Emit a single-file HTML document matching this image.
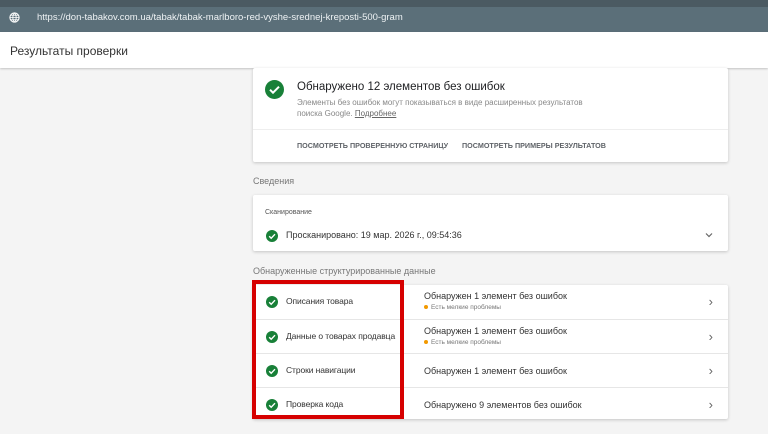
<!DOCTYPE html>
<html><head><meta charset="utf-8"><style>
*{box-sizing:border-box;margin:0;padding:0}
body{width:768px;height:434px;overflow:hidden;background:#f4f4f4;font-family:"Liberation Sans",sans-serif;position:relative;color:#202124}
.top{position:absolute;left:0;top:0;width:768px;height:7px;background:#4b5a62}
.url{position:absolute;left:0;top:7px;width:768px;height:25px;background:#5b6f79;color:#eef2f4;font-size:9.5px;line-height:22px;padding-left:37px}
.globe{position:absolute;left:9px;top:12px}
.hdr{position:absolute;left:0;top:32px;width:768px;height:36px;background:#fff;font-size:12px;line-height:38px;padding-left:10px;color:#333;box-shadow:0 1px 2px rgba(0,0,0,.2)}
.card{position:absolute;left:253px;width:475px;background:#fff;box-shadow:0 1px 3px rgba(0,0,0,.2);border-radius:2px}
.chk{position:absolute;width:12px;height:12px;border-radius:50%;background:#188038}
.chk svg{position:absolute;left:0;top:0}
.lbl{position:absolute;font-size:9px;color:#555}
.row{position:absolute;left:0;width:475px;height:34px;border-top:1px solid #e6e6e6}
.row .t{position:absolute;left:33px;top:11px;font-size:8.5px;color:#333;white-space:nowrap;letter-spacing:-.1px}
.row .r{position:absolute;left:171px;top:6px;font-size:9px;color:#333}
.row .r1{top:12px}
.row .s{position:absolute;left:171px;top:19px;font-size:6.5px;color:#777}
.row .s:before{content:"";display:inline-block;width:4px;height:4px;border-radius:50%;background:#f29900;margin-right:3px;vertical-align:middle}
.row .ar{position:absolute;right:15px;top:9px;font-size:13px;color:#666}
.red{position:absolute;left:252px;top:280px;width:152px;height:139px;border:4px solid #d60000}
.btn{position:absolute;top:73px;font-size:7.2px;font-weight:bold;color:#5f6368;white-space:nowrap}
</style></head><body>
<div class="top"></div>
<div class="url">https://don-tabakov.com.ua/tabak/tabak-marlboro-red-vyshe-srednej-kreposti-500-gram</div>
<svg class="globe" width="11" height="11" viewBox="0 0 12 12"><circle cx="6" cy="6" r="5" fill="none" stroke="#fff" stroke-width="1.2"/><path d="M1 6h10M6 1c-2.5 3-2.5 7 0 10M6 1c2.5 3 2.5 7 0 10M2 3.5h8M2 8.5h8" stroke="#fff" stroke-width="0.9" fill="none"/></svg>
<div class="hdr">Результаты проверки</div>

<div class="card" style="top:68px;height:94px">
 <div class="chk" style="left:12px;top:12px;width:19px;height:19px"><svg width="19" height="19" viewBox="0 0 19 19"><path d="M5 9.7l3 3 6-6" stroke="#fff" stroke-width="2" fill="none"/></svg></div>
 <div style="position:absolute;left:44px;top:13px;font-size:11.5px;color:#202124">Обнаружено 12 элементов без ошибок</div>
 <div style="position:absolute;left:44px;top:29px;font-size:8px;color:#888;line-height:11px;width:320px">Элементы без ошибок могут показываться в виде расширенных результатов<br>поиска Google. <span style="text-decoration:underline;color:#666">Подробнее</span></div>
 <div style="position:absolute;left:0;top:61px;width:475px;border-top:1px solid #eee"></div>
 <div class="btn" style="left:44px">ПОСМОТРЕТЬ ПРОВЕРЕННУЮ СТРАНИЦУ</div>
 <div class="btn" style="left:209px">ПОСМОТРЕТЬ ПРИМЕРЫ РЕЗУЛЬТАТОВ</div>
</div>

<div class="lbl" style="left:253px;top:176px;color:#777">Сведения</div>
<div class="card" style="top:195px;height:56px">
 <div style="position:absolute;left:12px;top:14px;font-size:7px;color:#555">Сканирование</div>
 <div class="chk" style="left:13px;top:35px"><svg width="12" height="12" viewBox="0 0 12 12"><path d="M3.2 6.2l2 2 3.8-4" stroke="#fff" stroke-width="1.4" fill="none"/></svg></div>
 <div style="position:absolute;left:33px;top:35px;font-size:9px;color:#333">Просканировано: 19 мар. 2026 г., 09:54:36</div>
 <svg style="position:absolute;right:15px;top:37px" width="8" height="6" viewBox="0 0 8 6"><path d="M1 1.5l3 3 3-3" stroke="#666" stroke-width="1.2" fill="none"/></svg>
</div>

<div class="lbl" style="left:253px;top:266px;color:#777">Обнаруженные структурированные данные</div>
<div class="card" style="top:285px;height:134px">
 <div class="row" style="top:0;border-top:none"><div class="chk" style="left:13px;top:11px"><svg width="12" height="12" viewBox="0 0 12 12"><path d="M3.2 6.2l2 2 3.8-4" stroke="#fff" stroke-width="1.4" fill="none"/></svg></div><div class="t">Описания товара</div><div class="r">Обнаружен 1 элемент без ошибок</div><div class="s">Есть мелкие проблемы</div><div class="ar">›</div></div>
 <div class="row" style="top:34px"><div class="chk" style="left:13px;top:11px"><svg width="12" height="12" viewBox="0 0 12 12"><path d="M3.2 6.2l2 2 3.8-4" stroke="#fff" stroke-width="1.4" fill="none"/></svg></div><div class="t">Данные о товарах продавца</div><div class="r">Обнаружен 1 элемент без ошибок</div><div class="s">Есть мелкие проблемы</div><div class="ar">›</div></div>
 <div class="row" style="top:68px"><div class="chk" style="left:13px;top:11px"><svg width="12" height="12" viewBox="0 0 12 12"><path d="M3.2 6.2l2 2 3.8-4" stroke="#fff" stroke-width="1.4" fill="none"/></svg></div><div class="t">Строки навигации</div><div class="r r1">Обнаружен 1 элемент без ошибок</div><div class="ar">›</div></div>
 <div class="row" style="top:102px"><div class="chk" style="left:13px;top:11px"><svg width="12" height="12" viewBox="0 0 12 12"><path d="M3.2 6.2l2 2 3.8-4" stroke="#fff" stroke-width="1.4" fill="none"/></svg></div><div class="t">Проверка кода</div><div class="r r1">Обнаружено 9 элементов без ошибок</div><div class="ar">›</div></div>
</div>
<div class="red"></div>
</body></html>
